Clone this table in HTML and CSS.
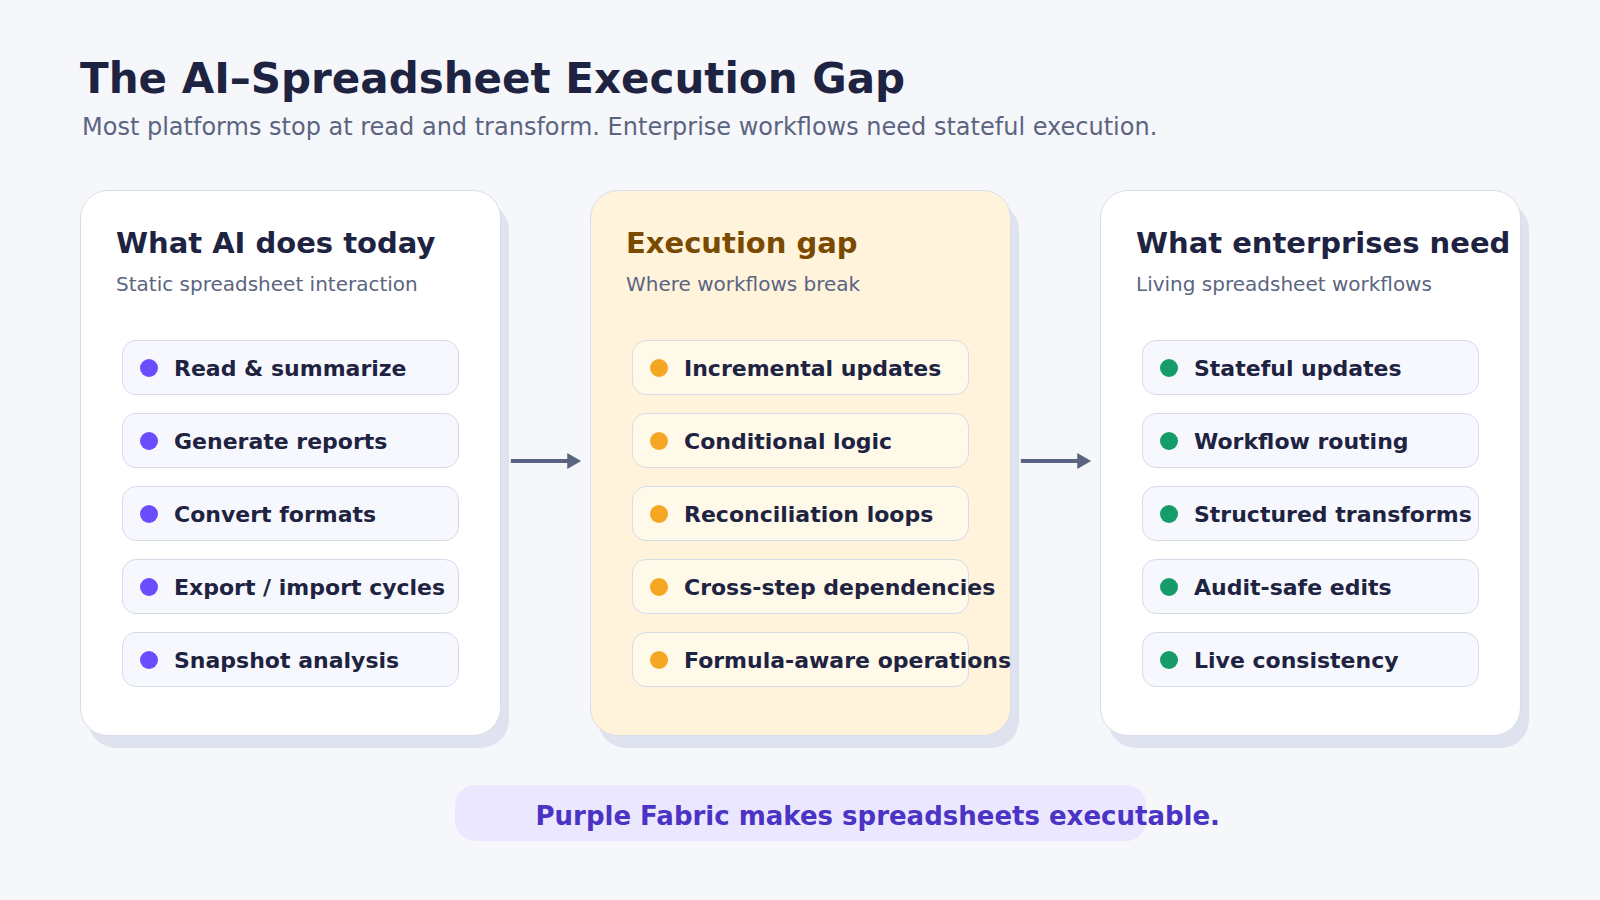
FILE: index.html
```html
<!DOCTYPE html>
<html lang="en">
<head>
<meta charset="utf-8">
<title>The AI–Spreadsheet Execution Gap</title>
<link rel="stylesheet" href="styles.css">
</head>
<body>
<main class="page">
  <h1 class="title">The AI–Spreadsheet Execution Gap</h1>
  <p class="subtitle">Most platforms stop at read and transform. Enterprise workflows need stateful execution.</p>

  <section class="columns">
    <div class="card">
      <h2 class="card-title">What AI does today</h2>
      <p class="card-sub">Static spreadsheet interaction</p>
      <ul class="items">
        <li class="item"><span class="dot dot-purple"></span><span class="label">Read &amp; summarize</span></li>
        <li class="item"><span class="dot dot-purple"></span><span class="label">Generate reports</span></li>
        <li class="item"><span class="dot dot-purple"></span><span class="label">Convert formats</span></li>
        <li class="item"><span class="dot dot-purple"></span><span class="label">Export / import cycles</span></li>
        <li class="item"><span class="dot dot-purple"></span><span class="label">Snapshot analysis</span></li>
      </ul>
    </div>

    <div class="arrow">
      <svg width="90" height="20" viewBox="0 0 90 20" aria-hidden="true">
        <line x1="10" y1="10" x2="70" y2="10" stroke="#5a6480" stroke-width="4"/>
        <polygon points="67,2 81,10 67,18" fill="#5a6480"/>
      </svg>
    </div>

    <div class="card card-gap">
      <h2 class="card-title">Execution gap</h2>
      <p class="card-sub">Where workflows break</p>
      <ul class="items">
        <li class="item"><span class="dot dot-orange"></span><span class="label">Incremental updates</span></li>
        <li class="item"><span class="dot dot-orange"></span><span class="label">Conditional logic</span></li>
        <li class="item"><span class="dot dot-orange"></span><span class="label">Reconciliation loops</span></li>
        <li class="item"><span class="dot dot-orange"></span><span class="label">Cross-step dependencies</span></li>
        <li class="item"><span class="dot dot-orange"></span><span class="label">Formula-aware operations</span></li>
      </ul>
    </div>

    <div class="arrow">
      <svg width="90" height="20" viewBox="0 0 90 20" aria-hidden="true">
        <line x1="10" y1="10" x2="70" y2="10" stroke="#5a6480" stroke-width="4"/>
        <polygon points="67,2 81,10 67,18" fill="#5a6480"/>
      </svg>
    </div>

    <div class="card">
      <h2 class="card-title">What enterprises need</h2>
      <p class="card-sub">Living spreadsheet workflows</p>
      <ul class="items">
        <li class="item"><span class="dot dot-green"></span><span class="label">Stateful updates</span></li>
        <li class="item"><span class="dot dot-green"></span><span class="label">Workflow routing</span></li>
        <li class="item"><span class="dot dot-green"></span><span class="label">Structured transforms</span></li>
        <li class="item"><span class="dot dot-green"></span><span class="label">Audit-safe edits</span></li>
        <li class="item"><span class="dot dot-green"></span><span class="label">Live consistency</span></li>
      </ul>
    </div>
  </section>

  <div class="footer">
    <div class="pill">Purple Fabric makes spreadsheets executable.</div>
  </div>
</main>
</body>
</html>
```

FILE: styles.css
```css
* {
  box-sizing: border-box;
}

html, body {
  margin: 0;
  padding: 0;
  background: #f6f7fb;
}

body {
  font-family: "DejaVu Sans", "Liberation Sans", sans-serif;
  color: #1e2341;
  width: 1600px;
  height: 900px;
  overflow: hidden;
}

.page {
  padding: 54px 0 0 80px;
}

.title {
  margin: 0;
  font-size: 42px;
  line-height: 50px;
  font-weight: 700;
  color: #1e2341;
}

.subtitle {
  margin: 8px 0 0 2px;
  font-size: 24px;
  line-height: 30px;
  color: #5b6581;
}

.columns {
  display: flex;
  align-items: stretch;
  margin-top: 48px;
}

.card {
  width: 421px;
  height: 546px;
  background: #ffffff;
  border: 1px solid #d8dde9;
  border-radius: 28px;
  box-shadow: 8px 12px 0 #dfe3ef;
  padding: 34px 0 0 35px;
}

.card-gap {
  background: #fff3dc;
}

.card-title {
  margin: 0;
  font-size: 29px;
  line-height: 36px;
  font-weight: 700;
  color: #1e2341;
  white-space: nowrap;
}

.card-gap .card-title {
  color: #7a4a00;
}

.card-sub {
  margin: 10px 0 0;
  font-size: 20px;
  line-height: 26px;
  color: #5b6581;
  white-space: nowrap;
}

.items {
  list-style: none;
  margin: 43px 0 0 6px;
  padding: 0;
  display: flex;
  flex-direction: column;
  gap: 18px;
}

.item {
  width: 337px;
  height: 55px;
  display: flex;
  align-items: center;
  gap: 16px;
  padding: 0 0 0 17px;
  background: #f7f8fd;
  border: 1px solid #d6dbe8;
  border-radius: 14px;
  white-space: nowrap;
}

.card-gap .item {
  background: #fff9ea;
}

.dot {
  flex: none;
  width: 18px;
  height: 18px;
  border-radius: 50%;
}

.dot-purple { background: #6b4dff; }
.dot-orange { background: #f5a623; }
.dot-green { background: #169c68; }

.label {
  font-size: 22px;
  font-weight: 700;
  color: #1e2341;
  line-height: 26px;
  padding-top: 2px;
}

.arrow {
  width: 89px;
  flex: none;
  display: flex;
  align-items: center;
}

.arrow svg {
  display: block;
  margin-bottom: 5px;
}

.footer {
  margin: 49px 0 0 -80px;
  display: flex;
  justify-content: center;
}

.pill {
  width: 691px;
  height: 56px;
  border-radius: 20px;
  background: #ebe7fe;
  color: #4b33c6;
  font-size: 26px;
  font-weight: 700;
  line-height: 30px;
  display: flex;
  align-items: center;
  padding: 5px 0 0 81px;
  white-space: nowrap;
}
```
